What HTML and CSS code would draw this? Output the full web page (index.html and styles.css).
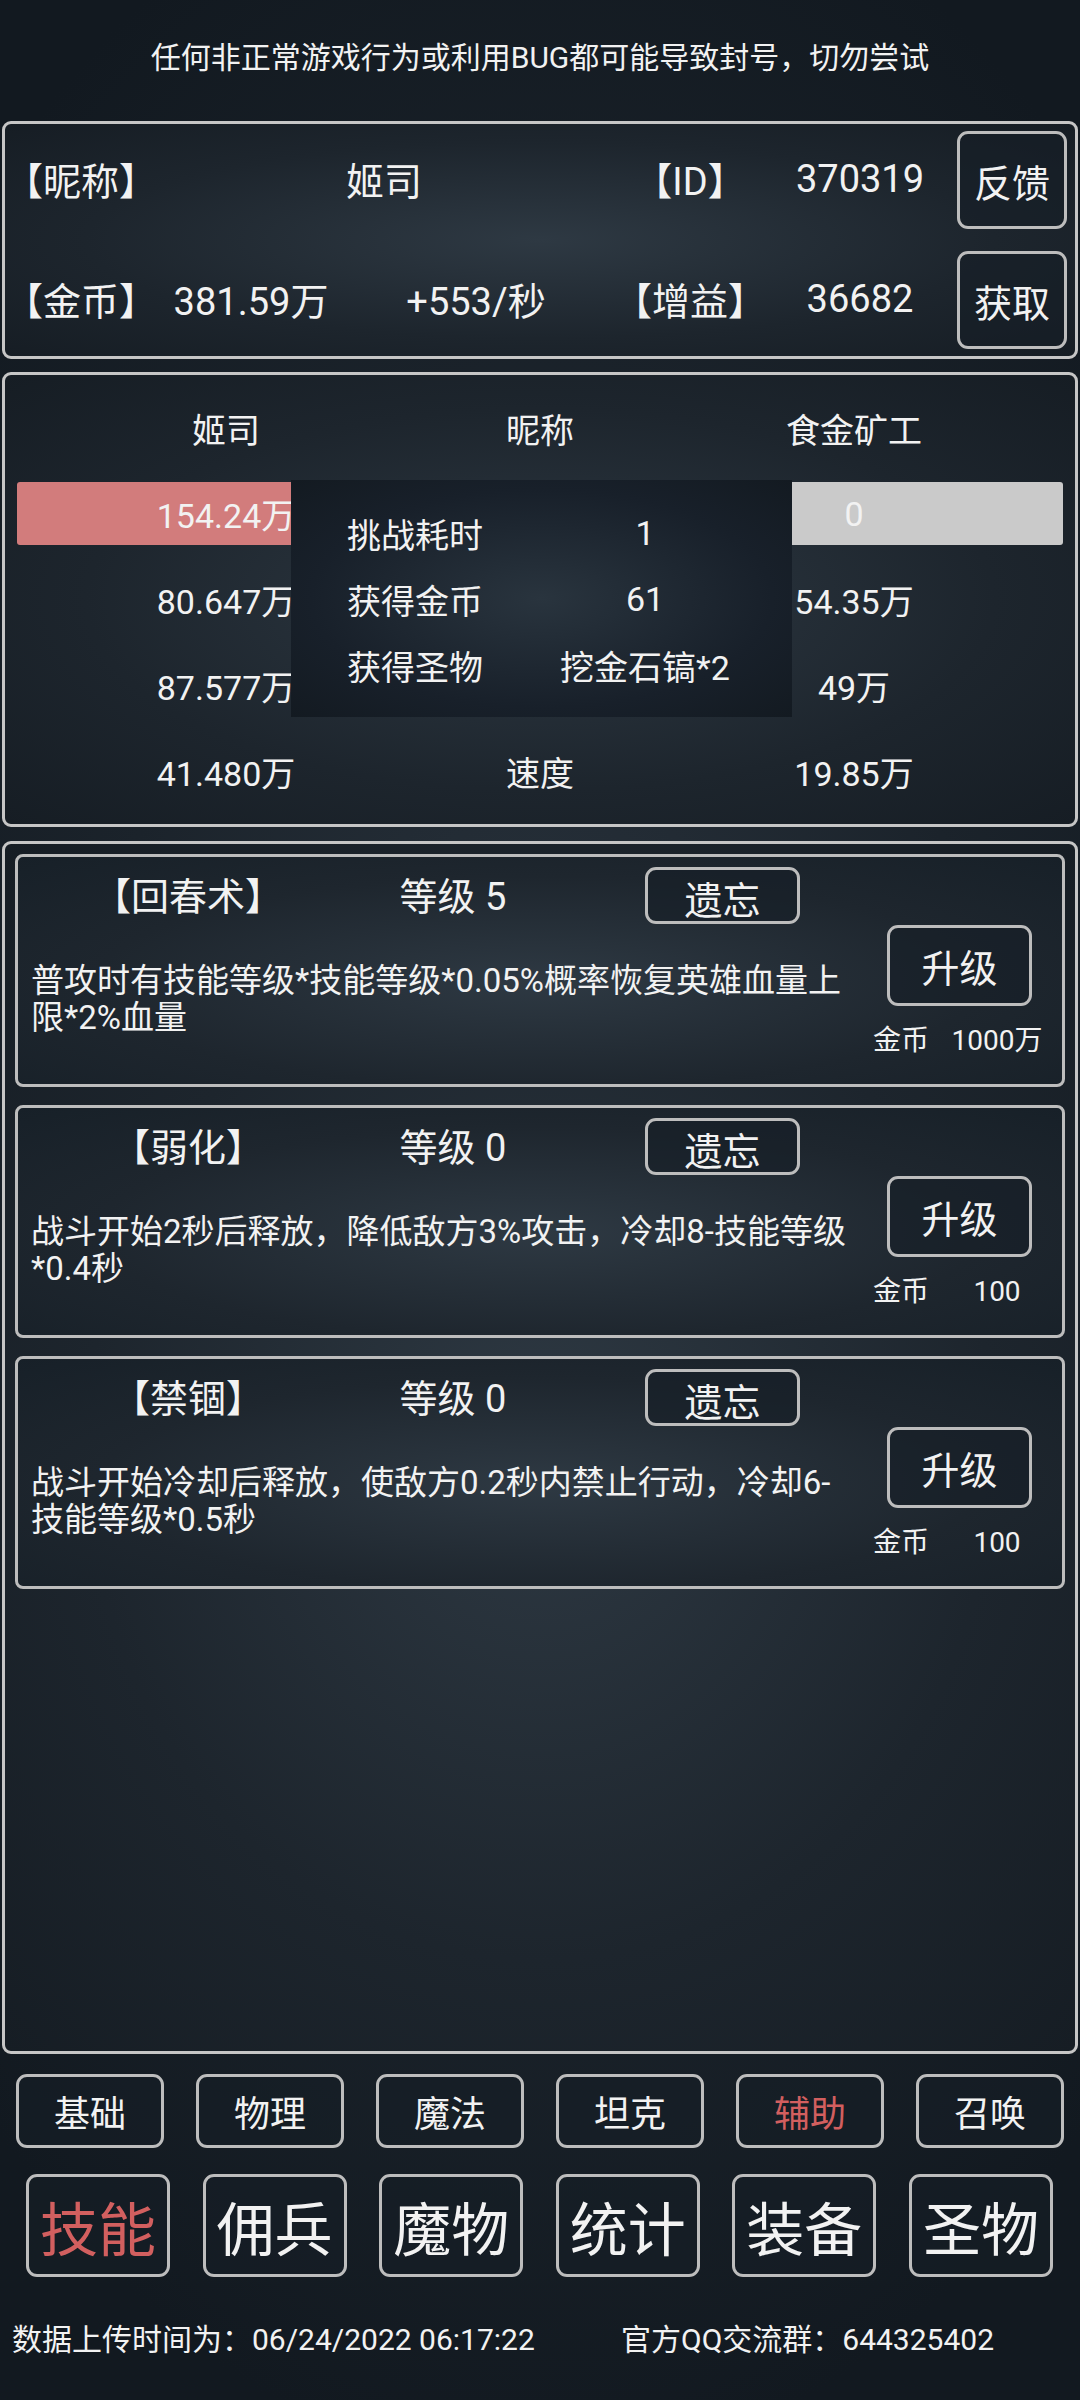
FILE: index.html
```html
<!DOCTYPE html>
<html lang="zh-CN">
<head>
    <meta charset="UTF-8">
    <meta name="viewport" content="width=device-width, initial-scale=1.0">
    <title>技能</title>
    <link rel="stylesheet" href="styles.css">
</head>
<body>
    <div class="screen">
        <div class="notice">任何非正常游戏行为或利用BUG都可能导致封号，切勿尝试</div>

        <section class="panel player">
            <div class="cell"><span class="br">【昵称】</span></div>
            <div class="cell name">姬司</div>
            <div class="cell"><span class="br">【ID】</span></div>
            <div class="cell">370319</div>
            <button class="btn side-btn">反馈</button>

            <div class="cell"><span class="br">【金币】</span></div>
            <div class="cell">381.59万</div>
            <div class="cell">+553/秒</div>
            <div class="cell"><span class="br">【增益】</span></div>
            <div class="cell">36682</div>
            <button class="btn side-btn">获取</button>
        </section>

        <section class="panel battle">
            <div class="row">
                <div>姬司</div>
                <div>昵称</div>
                <div>食金矿工</div>
            </div>
            <div class="row hp">
                <div>154.24万</div>
                <div></div>
                <div>0</div>
            </div>
            <div class="row">
                <div>80.647万</div>
                <div></div>
                <div>54.35万</div>
            </div>
            <div class="row">
                <div>87.577万</div>
                <div></div>
                <div>49万</div>
            </div>
            <div class="row">
                <div>41.480万</div>
                <div>速度</div>
                <div>19.85万</div>
            </div>

            <div class="result">
                <div class="result-row"><span>挑战耗时</span><span>1</span></div>
                <div class="result-row"><span>获得金币</span><span>61</span></div>
                <div class="result-row"><span>获得圣物</span><span>挖金石镐*2</span></div>
            </div>
        </section>

        <section class="panel skills">
            <div class="skill">
                <div class="skill-head">
                    <div class="skill-name"><span class="br">【回春术】</span></div>
                    <div class="skill-level">等级 5</div>
                    <button class="btn forget">遗忘</button>
                </div>
                <div class="skill-body">
                    <p class="skill-desc">普攻时有技能等级*技能等级*0.05%概率恢复英雄血量上限*2%血量</p>
                    <div class="skill-side">
                        <button class="btn upgrade">升级</button>
                        <div class="cost"><span>金币</span><span>1000万</span></div>
                    </div>
                </div>
            </div>

            <div class="skill">
                <div class="skill-head">
                    <div class="skill-name"><span class="br">【弱化】</span></div>
                    <div class="skill-level">等级 0</div>
                    <button class="btn forget">遗忘</button>
                </div>
                <div class="skill-body">
                    <p class="skill-desc">战斗开始2秒后释放，降低敌方3%攻击，冷却8-技能等级*0.4秒</p>
                    <div class="skill-side">
                        <button class="btn upgrade">升级</button>
                        <div class="cost"><span>金币</span><span>100</span></div>
                    </div>
                </div>
            </div>

            <div class="skill">
                <div class="skill-head">
                    <div class="skill-name"><span class="br">【禁锢】</span></div>
                    <div class="skill-level">等级 0</div>
                    <button class="btn forget">遗忘</button>
                </div>
                <div class="skill-body">
                    <p class="skill-desc">战斗开始冷却后释放，使敌方0.2秒内禁止行动，冷却6-技能等级*0.5秒</p>
                    <div class="skill-side">
                        <button class="btn upgrade">升级</button>
                        <div class="cost"><span>金币</span><span>100</span></div>
                    </div>
                </div>
            </div>
        </section>

        <nav class="tabs-small">
            <button class="btn">基础</button>
            <button class="btn">物理</button>
            <button class="btn">魔法</button>
            <button class="btn">坦克</button>
            <button class="btn active">辅助</button>
            <button class="btn">召唤</button>
        </nav>

        <nav class="tabs-main">
            <button class="btn active">技能</button>
            <button class="btn">佣兵</button>
            <button class="btn">魔物</button>
            <button class="btn">统计</button>
            <button class="btn">装备</button>
            <button class="btn">圣物</button>
        </nav>

        <footer class="footer">
            <span class="upload">数据上传时间为：06/24/2022 06:17:22</span>
            <span>官方QQ交流群：644325402</span>
        </footer>
    </div>
</body>
</html>
```

FILE: styles.css
```css
html, body {
    margin: 0;
    padding: 0;
}
body {
    width: 1080px;
    height: 2400px;
    overflow: hidden;
    font-family: Roboto, "Noto Sans CJK SC", sans-serif;
    color: #f2f2f2;
    background: radial-gradient(ellipse 75% 55% at 50% 48%, #2a343e 0%, #1b232b 55%, #121920 100%);
}
.screen {
    display: flex;
    flex-direction: column;
    padding: 0 2px;
}
.br {
    font-feature-settings: "halt";
}
.btn {
    font-family: inherit;
    color: #f2f2f2;
    background: rgba(22, 30, 38, 0.6);
    border: 3px solid #bdbdbd;
    border-radius: 11px;
    padding: 0;
    box-sizing: border-box;
}
.notice {
    padding-top: 38px;
    height: 40px;
    line-height: 40px;
    margin-bottom: 43px;
    text-align: center;
    font-size: 30px;
}
.panel {
    border: 3px solid #c6c6c6;
    border-radius: 9px;
    box-sizing: border-box;
    background: radial-gradient(ellipse at 50% 50%, #2e3943 0%, #1d252d 60%, #161d24 100%);
}

/* player info */
.player {
    display: grid;
    grid-template-columns: 138px 202px 248px 180px 160px 1fr;
    grid-template-rows: 98px 98px;
    row-gap: 22px;
    padding: 7px 8px 7px 7px;
    font-size: 38px;
}
.player .cell {
    display: flex;
    align-items: center;
    justify-content: center;
    white-space: nowrap;
    padding-bottom: 3px;
}
.player .name {
    grid-column: span 2;
    padding-left: 18px;
}
.side-btn {
    width: 110px;
    height: 98px;
    justify-self: end;
    font-size: 38px;
}

/* battle */
.battle {
    position: relative;
    margin-top: 13px;
    padding: 10px 0;
    font-size: 34px;
}
.battle .row {
    display: grid;
    grid-template-columns: repeat(3, 314px);
    justify-content: center;
    align-items: center;
    height: 86px;
    text-align: center;
    white-space: nowrap;
}
.battle .hp {
    margin: 11px 12px;
    height: 63px;
    border-radius: 3px;
    background: linear-gradient(to right, #d27c7c 50%, #cacaca 50%);
}
.result {
    position: absolute;
    left: 286px;
    top: 105px;
    width: 501px;
    height: 237px;
    box-sizing: border-box;
    padding-top: 20px;
    background: radial-gradient(ellipse at 50% 50%, #29343e 0%, #18202a 65%, #131a21 100%);
}
.result-row {
    display: grid;
    grid-template-columns: 248px 212px;
    height: 66px;
    align-items: center;
    text-align: center;
    white-space: nowrap;
}

/* skills */
.skills {
    margin-top: 14px;
    height: 1213px;
    padding: 10px;
    display: flex;
    flex-direction: column;
    gap: 18px;
}
.skill {
    height: 233px;
    border: 3px solid #bdbdbd;
    border-radius: 8px;
    box-sizing: border-box;
    padding-top: 9px;
    background: radial-gradient(ellipse at 50% 55%, #2e3943 0%, #1e262e 60%, #172028 100%);
}
.skill-head {
    display: grid;
    grid-template-columns: 314px 216px 155px;
    padding-left: 13px;
    height: 57px;
    align-items: center;
    font-size: 38px;
}
.skill-name, .skill-level {
    text-align: center;
    white-space: nowrap;
    padding-bottom: 3px;
}
.forget {
    margin-left: 84px;
    width: 155px;
    height: 57px;
    font-size: 38px;
}
.skill-body {
    display: grid;
    grid-template-columns: 822px 192px;
    padding-left: 13px;
    margin-top: 2px;
}
.skill-desc {
    margin: 37px 0 0;
    font-size: 33px;
    line-height: 37px;
}
.upgrade {
    margin-left: 34px;
    width: 145px;
    height: 81px;
    font-size: 38px;
}
.cost {
    display: grid;
    grid-template-columns: 96px 96px;
    margin-top: 17px;
    height: 36px;
    line-height: 36px;
    font-size: 28px;
    text-align: center;
    white-space: nowrap;
}

/* tabs */
.tabs-small {
    display: grid;
    grid-template-columns: repeat(6, 148px);
    column-gap: 32px;
    margin-top: 20px;
    padding-left: 14px;
}
.tabs-small .btn {
    height: 74px;
    font-size: 36px;
}
.tabs-main {
    display: grid;
    grid-template-columns: repeat(6, 144px);
    column-gap: 32.6px;
    margin-top: 26px;
    padding-left: 24px;
}
.tabs-main .btn {
    height: 103px;
    font-size: 58px;
}
.btn.active {
    color: #d25f5f;
}

.footer {
    display: flex;
    margin-top: 43px;
    padding-left: 10px;
    height: 40px;
    line-height: 40px;
    font-size: 30px;
    white-space: nowrap;
}
.upload {
    width: 609px;
}
```
